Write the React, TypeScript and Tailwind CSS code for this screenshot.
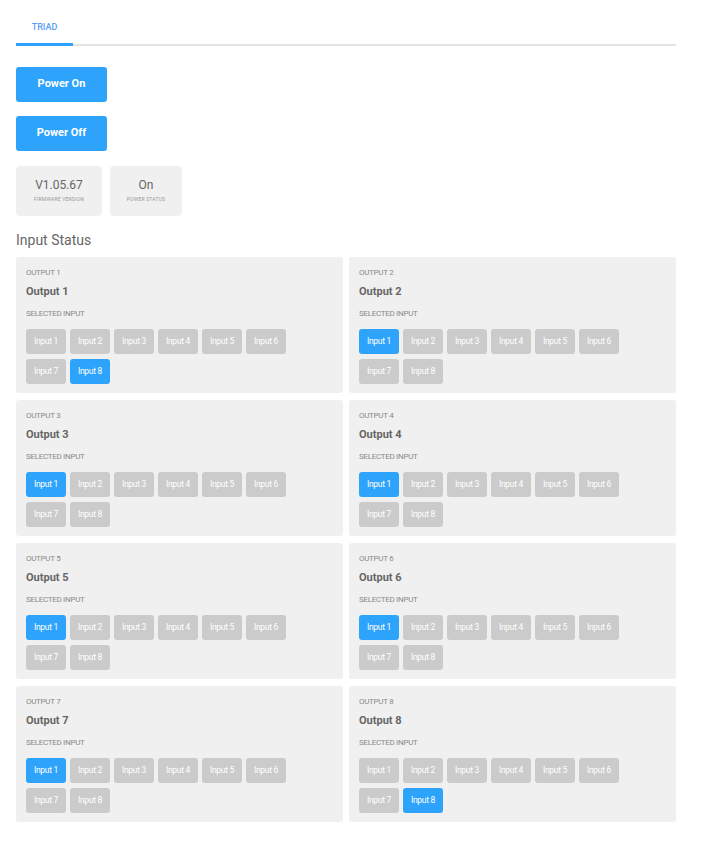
import React from 'react';

const selected = [8, 1, 1, 1, 1, 1, 1, 8];

const OutputCard = ({ n, sel }: { n: number; sel: number }) => (
  <div className="bg-[#f0f0f0] rounded-[3px] px-[10px] pt-[11px] pb-[9px]">
    <div className="text-[8px] leading-[10px] text-[#8a8a8a] tracking-[-0.3px]">OUTPUT {n}</div>
    <div className="text-[11px] leading-[14px] font-bold text-[#666] mt-[7px]">Output {n}</div>
    <div className="text-[8px] leading-[10px] text-[#8a8a8a] mt-[10px] tracking-[-0.3px]">SELECTED INPUT</div>
    <div className="flex flex-wrap gap-x-[4px] gap-y-[5px] mt-[10px] w-[270px]">
      {[1, 2, 3, 4, 5, 6, 7, 8].map((i) => (
        <button
          key={i}
          className={`w-[40px] h-[25px] rounded-[3px] text-[8.5px] text-white tracking-[-0.3px] ${
            i === sel ? 'bg-[#2ea3fb]' : 'bg-[#cbcbcb]'
          }`}
        >
          Input {i}
        </button>
      ))}
    </div>
  </div>
);

export default function App() {
  return (
    <div className="bg-white min-h-screen font-['Roboto',sans-serif]">
      <div className="w-[660px] ml-4">
        {/* Tabs */}
        <div className="flex border-b-2 border-[#e4e4e4]">
          <div className="w-[57px] text-center pt-[21px] pb-[10px] text-[9px] leading-[12px] font-medium text-[#5a9cf8] border-b-[3px] border-[#2ea3fb] -mb-[2px]">
            TRIAD
          </div>
        </div>

        <button className="block mt-[21px] w-[91px] h-[35px] rounded-[3px] bg-[#2ea3fb] text-white text-[11px] font-bold">
          Power On
        </button>
        <button className="block mt-[14px] w-[91px] h-[35px] rounded-[3px] bg-[#2ea3fb] text-white text-[11px] font-bold">
          Power Off
        </button>

        <div className="flex gap-[8px] mt-[15px]">
          <div className="w-[86px] h-[50px] rounded-[4px] bg-[#f0f0f0] flex flex-col items-center pt-[12px]">
            <div className="text-[12px] leading-[14px] text-[#666]">V1.05.67</div>
            <div className="text-[5px] leading-[6px] text-[#999] mt-[4px] tracking-[0.2px]">FIRMWARE VERSION</div>
          </div>
          <div className="w-[72px] h-[50px] rounded-[4px] bg-[#f0f0f0] flex flex-col items-center pt-[12px]">
            <div className="text-[12px] leading-[14px] text-[#666]">On</div>
            <div className="text-[5px] leading-[6px] text-[#999] mt-[4px] tracking-[0.2px]">POWER STATUS</div>
          </div>
        </div>

        <div className="mt-[15px] text-[14px] leading-[18px] text-[#666]">Input Status</div>

        <div className="grid grid-cols-2 gap-x-[6px] gap-y-[7px] mt-[8px]">
          {selected.map((s, idx) => (
            <OutputCard key={idx} n={idx + 1} sel={s} />
          ))}
        </div>
      </div>
    </div>
  );
}
